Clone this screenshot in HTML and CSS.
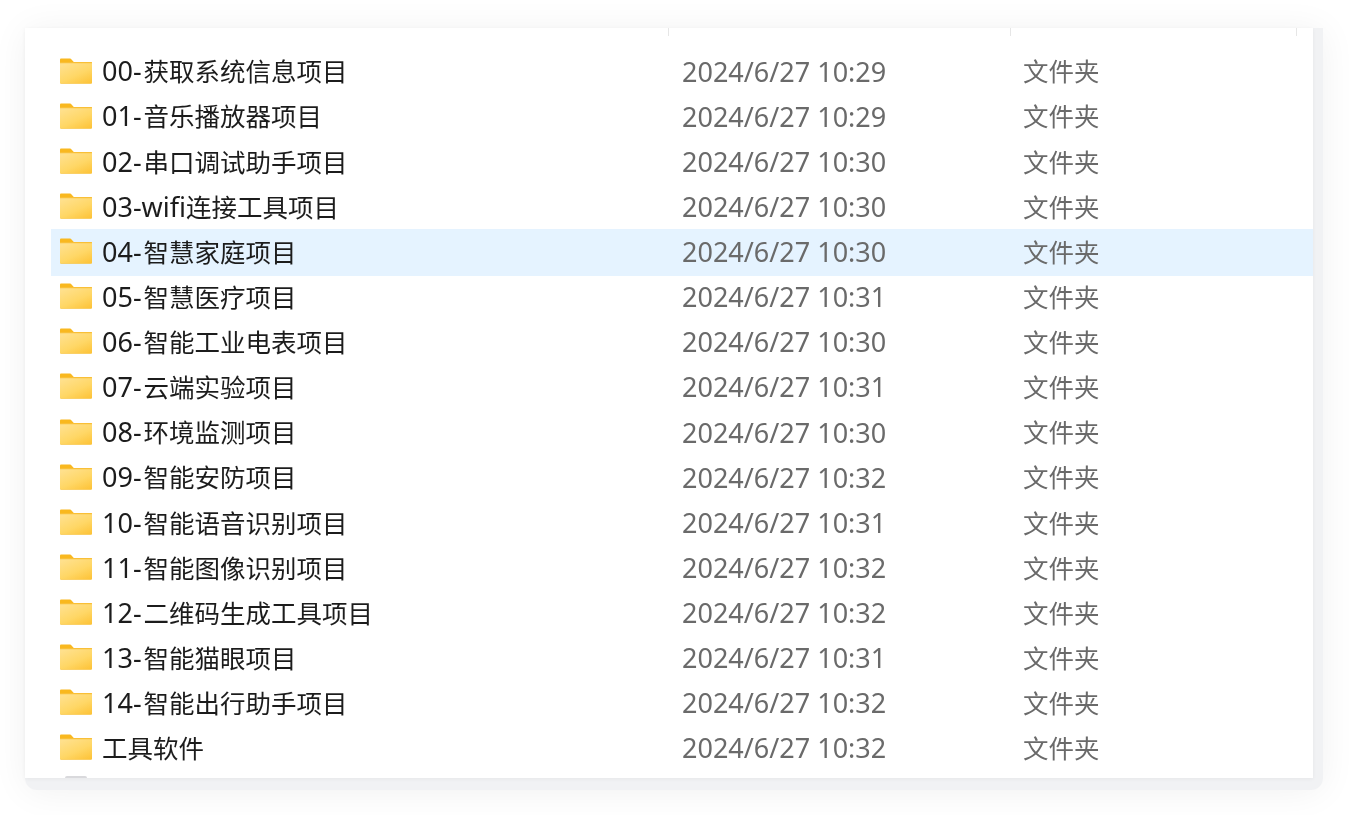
FILE: index.html
```html
<!DOCTYPE html>
<html lang="zh">
<head>
<meta charset="utf-8">
<title>文件列表</title>
<link rel="stylesheet" href="styles.css">
</head>
<body>
<svg class="defs" width="0" height="0" aria-hidden="true">
  <defs>
    <linearGradient id="folderFront" x1="0.2" y1="0" x2="0.9" y2="1">
      <stop offset="0" stop-color="#ffe08c"/>
      <stop offset="0.55" stop-color="#ffd766"/>
      <stop offset="1" stop-color="#fdc43a"/>
    </linearGradient>
    <symbol id="folder" viewBox="0 0 32 26">
      <path d="M1.200 0.500h8.300c1 0 1.500.3 2 .9L13.800 4H31c.6 0 1 .4 1 1v4H0V1.700c0-.7.5-1.200 1.200-1.200z" fill="#f9b81f"/>
      <path d="M0 4.300h32V24.500c0 .8-.6 1.300-1.300 1.300H1.300C.6 25.800 0 25.300 0 24.500z" fill="#f8c23f"/>
      <path d="M0 5.200h32V24.300c0 .6-.4 1-1 1H1c-.6 0-1-.4-1-1z" fill="url(#folderFront)"/>
    </symbol>
  </defs>
</svg>
<main class="frame">
  <section class="panel">
    <div class="ticks">
      <span class="tick tick-name"></span>
      <span class="tick tick-date"></span>
      <span class="tick tick-type"></span>
    </div>
    <ul class="list">
      <li class="row"><span class="name"><svg class="folder"><use href="#folder"/></svg><span class="label"><span class="latin">00-</span>获取系统信息项目</span></span><span class="date">2024/6/27 10:29</span><span class="type">文件夹</span></li>
      <li class="row"><span class="name"><svg class="folder"><use href="#folder"/></svg><span class="label"><span class="latin">01-</span>音乐播放器项目</span></span><span class="date">2024/6/27 10:29</span><span class="type">文件夹</span></li>
      <li class="row"><span class="name"><svg class="folder"><use href="#folder"/></svg><span class="label"><span class="latin">02-</span>串口调试助手项目</span></span><span class="date">2024/6/27 10:30</span><span class="type">文件夹</span></li>
      <li class="row"><span class="name"><svg class="folder"><use href="#folder"/></svg><span class="label"><span class="latin latin-word">03-wifi</span>连接工具项目</span></span><span class="date">2024/6/27 10:30</span><span class="type">文件夹</span></li>
      <li class="row row-selected"><span class="name"><svg class="folder"><use href="#folder"/></svg><span class="label"><span class="latin">04-</span>智慧家庭项目</span></span><span class="date">2024/6/27 10:30</span><span class="type">文件夹</span></li>
      <li class="row"><span class="name"><svg class="folder"><use href="#folder"/></svg><span class="label"><span class="latin">05-</span>智慧医疗项目</span></span><span class="date">2024/6/27 10:31</span><span class="type">文件夹</span></li>
      <li class="row"><span class="name"><svg class="folder"><use href="#folder"/></svg><span class="label"><span class="latin">06-</span>智能工业电表项目</span></span><span class="date">2024/6/27 10:30</span><span class="type">文件夹</span></li>
      <li class="row"><span class="name"><svg class="folder"><use href="#folder"/></svg><span class="label"><span class="latin">07-</span>云端实验项目</span></span><span class="date">2024/6/27 10:31</span><span class="type">文件夹</span></li>
      <li class="row"><span class="name"><svg class="folder"><use href="#folder"/></svg><span class="label"><span class="latin">08-</span>环境监测项目</span></span><span class="date">2024/6/27 10:30</span><span class="type">文件夹</span></li>
      <li class="row"><span class="name"><svg class="folder"><use href="#folder"/></svg><span class="label"><span class="latin">09-</span>智能安防项目</span></span><span class="date">2024/6/27 10:32</span><span class="type">文件夹</span></li>
      <li class="row"><span class="name"><svg class="folder"><use href="#folder"/></svg><span class="label"><span class="latin">10-</span>智能语音识别项目</span></span><span class="date">2024/6/27 10:31</span><span class="type">文件夹</span></li>
      <li class="row"><span class="name"><svg class="folder"><use href="#folder"/></svg><span class="label"><span class="latin">11-</span>智能图像识别项目</span></span><span class="date">2024/6/27 10:32</span><span class="type">文件夹</span></li>
      <li class="row"><span class="name"><svg class="folder"><use href="#folder"/></svg><span class="label"><span class="latin">12-</span>二维码生成工具项目</span></span><span class="date">2024/6/27 10:32</span><span class="type">文件夹</span></li>
      <li class="row"><span class="name"><svg class="folder"><use href="#folder"/></svg><span class="label"><span class="latin">13-</span>智能猫眼项目</span></span><span class="date">2024/6/27 10:31</span><span class="type">文件夹</span></li>
      <li class="row"><span class="name"><svg class="folder"><use href="#folder"/></svg><span class="label"><span class="latin">14-</span>智能出行助手项目</span></span><span class="date">2024/6/27 10:32</span><span class="type">文件夹</span></li>
      <li class="row"><span class="name"><svg class="folder"><use href="#folder"/></svg><span class="label">工具软件</span></span><span class="date">2024/6/27 10:32</span><span class="type">文件夹</span></li>
      <li class="row row-cut"><span class="name"><span class="peek"></span></span></li>
    </ul>
  </section>
</main>
</body>
</html>
```
FILE: styles.css
```css
html, body {
  margin: 0;
  height: 100%;
  background: #ffffff;
  overflow: hidden;
}
body {
  padding: 28px 0 0 25px;
  box-sizing: border-box;
  font-family: "Noto Sans", "Noto Sans CJK SC", sans-serif;
}
.defs {
  display: block;
  height: 0;
}
.frame {
  width: 1298px;
  height: 762px;
  background: #f1f2f4;
  border-radius: 0 0 12px 12px;
  box-shadow: 0 2px 36px rgba(0, 0, 0, 0.06);
}
.panel {
  position: relative;
  width: 1288px;
  height: 750px;
  background: #ffffff;
  overflow: hidden;
  box-shadow: 0 1px 4px rgba(0, 0, 0, 0.05);
}
.ticks {
  position: absolute;
  inset: 0 0 auto 0;
  height: 8px;
}
.tick {
  position: absolute;
  top: 0;
  width: 1px;
  height: 8px;
  background: #e6e6e6;
}
.tick-name { left: 643px; }
.tick-date { left: 985px; }
.tick-type { left: 1271px; }
.list {
  list-style: none;
  margin: 0;
  padding: 21.5px 0 0 26px;
}
.row {
  display: grid;
  grid-template-columns: 631px 341px 1fr;
  align-items: center;
  height: 45.13px;
  font-size: 25.5px;
  line-height: 1;
  white-space: nowrap;
}
.row-selected {
  background: #e5f3ff;
  box-shadow: 0 1px 0 #e5f3ff, 0 -1px 0 #e5f3ff;
}
.row-cut {
  align-items: start;
}
.name {
  display: flex;
  align-items: center;
  gap: 10px;
  padding-left: 9px;
  color: #1c1c1c;
}
.label, .date, .type, .folder {
  filter: blur(0.4px);
}
.label:has(.latin), .date {
  margin-top: -2px;
}
.latin, .date {
  font-size: 27px;
}
.latin {
  line-height: 1;
  padding-right: 2px;
}
.latin-word {
  padding-right: 0;
}
.date, .type {
  color: #6a6a6a;
}
.folder {
  flex: none;
  width: 32px;
  height: 26px;
  margin-top: -3px;
}
.peek {
  display: block;
  width: 22px;
  height: 26px;
  margin: 4.500px 0 0 5px;
  background: #d9d9dc;
  border-radius: 2px 2px 0 0;
}
```
